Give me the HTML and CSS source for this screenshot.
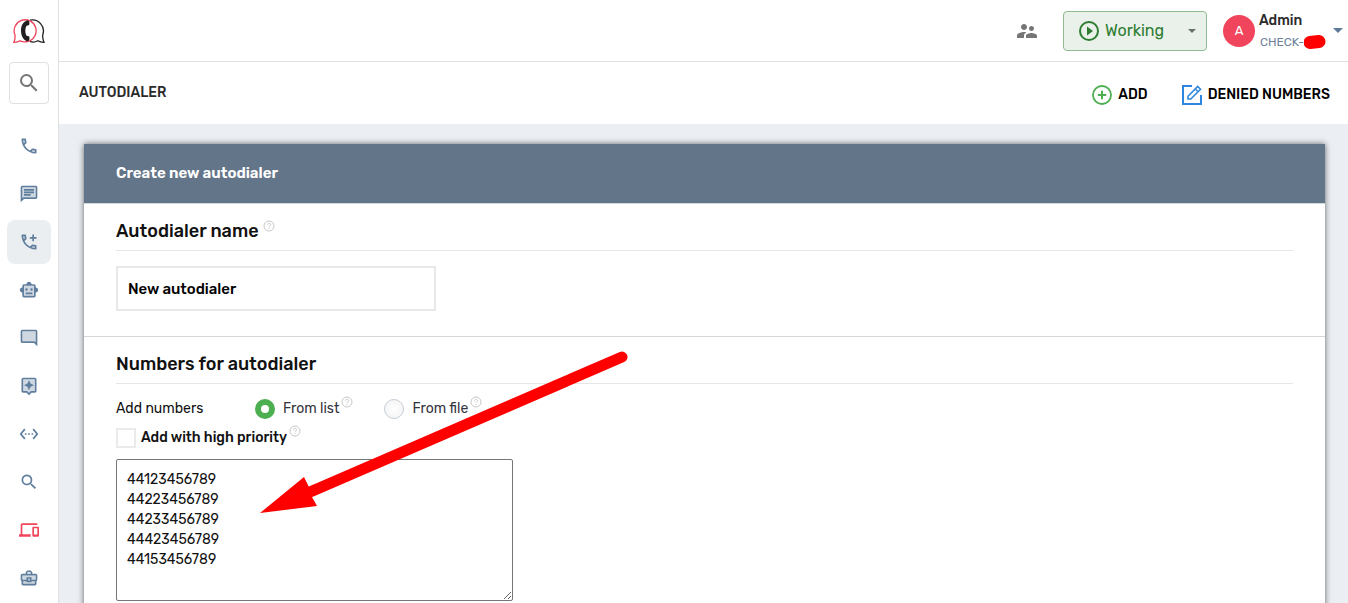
FILE: index.html
```html
<!DOCTYPE html>
<html lang="en">
<head>
    <meta charset="UTF-8">
    <meta name="viewport" content="width=device-width, initial-scale=1.0">
    <title>Autodialer</title>
    <link rel="stylesheet" href="styles.css">
</head>
<body>
    <div class="app">
        <aside class="sidebar">
            <a class="logo" href="#" aria-label="Home">
                <svg width="32" height="26" viewBox="0 0 32 26" fill="none">
                    <path d="M17 2.200a11 11 0 0 1 12.800 14.300c-.4 2.500.2 5.500 1.200 7.900-2.600 0-4.700-.6-6.200-1.600-2.500 1.400-5.500 1.600-8 .5" stroke="#231f20" stroke-width="1.300"/>
                    <path d="M7 22.800C4.500 23.900 2.500 24.400.8 24.400 2 22 2.300 19.500 1.900 16.800A11 11 0 1 1 15 23.400c-3 .9-5.600.5-8-.6z" stroke="#f0455c" stroke-width="1.300"/>
                    <path d="M15 2.300c-4.500.7-7 5-7 10.200 0 5.700 2.700 10.300 7 10.900 1.300-.7 2-2.900 1.200-4.900l-2.900-.9c-1.300-2.900-1.300-6.600 0-9.500l2.800-1c.8-1.900.3-4.100-1.100-4.800z" fill="#231f20"/>
                </svg>
            </a>
            <button class="search-btn" type="button" aria-label="Search">
                <svg width="24" height="24" viewBox="0 0 24 24" fill="currentColor"><path d="M15.500 14h-.79l-.28-.27A6.471 6.471 0 0 0 16 9.500 6.500 6.500 0 1 0 9.500 16c1.610 0 3.090-.59 4.230-1.570l.27.28v.79l5 4.990L20.490 19l-4.990-5zm-6 0C7.010 14 5 11.990 5 9.500S7.010 5 9.500 5 14 7.010 14 9.500 11.990 14 9.500 14z"/></svg>
            </button>
            <nav class="menu">
                <a class="menu-item" href="#" aria-label="Calls">
                    <svg viewBox="0 0 24 24"><path opacity=".3" d="M5 5h1.600l.4 2.600-1.300 1.300zM15.200 18.200l1.200-1.200 2.600.5v1.500z"/><path d="M6.540 5c.06.89.21 1.760.45 2.590l-1.200 1.200c-.41-1.200-.67-2.470-.76-3.790h1.510m9.860 12.020c.85.24 1.720.39 2.600.45v1.490c-1.320-.09-2.590-.35-3.800-.75l1.200-1.190M7.500 3H4c-.55 0-1 .45-1 1 0 9.390 7.610 17 17 17 .55 0 1-.45 1-1v-3.490c0-.55-.45-1-1-1-1.240 0-2.450-.2-3.570-.57-.1-.04-.21-.05-.31-.05-.26 0-.51.1-.71.29l-2.200 2.200c-2.830-1.450-5.150-3.760-6.590-6.590l2.200-2.200c.28-.28.36-.67.25-1.020C8.700 6.450 8.500 5.250 8.500 4c0-.55-.45-1-1-1z"/></svg>
                </a>
                <a class="menu-item" href="#" aria-label="Messages">
                    <svg viewBox="0 0 24 24"><path opacity=".3" d="M4 4v13.170L5.170 16H20V4H4z"/><path d="M4 18h16c1.100 0 2-.9 2-2V4c0-1.100-.9-2-2-2H4c-1.100 0-1.990.9-1.990 2L2 22l4-4h-2zm0-14h16v12H5.170L4 17.170V4zm2 8h8v2H6zm0-3h12v2H6zm0-3h12v2H6z"/></svg>
                </a>
                <a class="menu-item active" href="#" aria-label="Autodialer">
                    <svg viewBox="0 0 24 24"><path opacity=".3" d="M5 5h1.600l.4 2.600-1.300 1.300zM15.200 18.200l1.200-1.200 2.600.5v1.500z"/><path d="M6.540 5c.06.89.21 1.760.45 2.590l-1.200 1.200c-.41-1.200-.67-2.470-.76-3.790h1.510m9.860 12.020c.85.24 1.720.39 2.600.45v1.490c-1.320-.09-2.590-.35-3.800-.75l1.200-1.190M7.500 3H4c-.55 0-1 .45-1 1 0 9.390 7.610 17 17 17 .55 0 1-.45 1-1v-3.490c0-.55-.45-1-1-1-1.240 0-2.450-.2-3.570-.57-.1-.04-.21-.05-.31-.05-.26 0-.51.1-.71.29l-2.200 2.200c-2.830-1.450-5.150-3.760-6.590-6.590l2.200-2.200c.28-.28.36-.67.25-1.020C8.700 6.450 8.500 5.250 8.500 4c0-.55-.45-1-1-1zM16 3h2v3h3v2h-3v3h-2V8h-3V6h3z"/></svg>
                </a>
                <a class="menu-item" href="#" aria-label="Robots">
                    <svg viewBox="0 0 24 24"><path opacity=".3" d="M6 7h12v12H6z"/><path d="M20 9V7c0-1.100-.9-2-2-2h-3c0-1.660-1.340-3-3-3S9 3.340 9 5H6c-1.100 0-2 .9-2 2v2c-1.660 0-3 1.340-3 3s1.340 3 3 3v4c0 1.100.9 2 2 2h12c1.100 0 2-.9 2-2v-4c1.660 0 3-1.340 3-3s-1.340-3-3-3zm-2 10H6V7h12v12zM9 13a1.500 1.500 0 1 1 0-3 1.500 1.500 0 0 1 0 3zm7.500-1.500a1.500 1.500 0 1 1-3 0 1.500 1.500 0 0 1 3 0zM8 15h8v2H8z"/></svg>
                </a>
                <a class="menu-item" href="#" aria-label="Chats">
                    <svg viewBox="0 0 24 24"><path opacity=".3" d="M4 16h14.830L20 17.170V4H4v12z"/><path d="M22 4c0-1.100-.9-2-2-2H4c-1.100 0-2 .9-2 2v12c0 1.100.9 2 2 2h14l4 4V4zm-2 13.170L18.830 16H4V4h16v13.170z"/></svg>
                </a>
                <a class="menu-item" href="#" aria-label="Assistant">
                    <svg viewBox="0 0 24 24"><path opacity=".3" d="M5 4v14h4.830L12 20.170 14.170 18H19V4H5z"/><path d="M19 2H5c-1.100 0-2 .9-2 2v14c0 1.100.9 2 2 2h4l3 3 3-3h4c1.100 0 2-.9 2-2V4c0-1.100-.9-2-2-2zm0 16h-4.830L12 20.170 9.830 18H5V4h14v14zm-7-1l1.880-4.120L18 11l-4.120-1.880L12 5l-1.880 4.120L6 11l4.120 1.880z"/></svg>
                </a>
                <a class="menu-item" href="#" aria-label="Integrations">
                    <svg viewBox="0 0 24 24"><path d="M7.770 6.760L6.230 5.480.82 12l5.410 6.520 1.540-1.280L3.420 12l4.350-5.240zM7 13h2v-2H7v2zm10-2h-2v2h2v-2zm-6 2h2v-2h-2v2zm6.770-7.520l-1.540 1.280L20.580 12l-4.350 5.240 1.540 1.280L23.180 12l-5.410-6.520z"/></svg>
                </a>
                <a class="menu-item" href="#" aria-label="Find">
                    <svg viewBox="0 0 24 24"><path d="M15.500 14h-.79l-.28-.27A6.471 6.471 0 0 0 16 9.500 6.500 6.500 0 1 0 9.500 16c1.610 0 3.090-.59 4.230-1.570l.27.28v.79l5 4.990L20.490 19l-4.990-5zm-6 0C7.010 14 5 11.990 5 9.500S7.010 5 9.500 5 14 7.010 14 9.500 11.990 14 9.500 14z"/></svg>
                </a>
                <a class="menu-item danger" href="#" aria-label="Devices">
                    <svg viewBox="0 0 24 24"><path d="M4 6h18V4H4c-1.100 0-2 .9-2 2v11H0v3h14v-3H4V6zm19 2h-6c-.55 0-1 .45-1 1v10c0 .55.450 1 1 1h6c.55 0 1-.45 1-1V9c0-.55-.45-1-1-1zm-1 9.500h-4V10h4v7.500z"/></svg>
                </a>
                <a class="menu-item" href="#" aria-label="Business">
                    <svg viewBox="0 0 24 24"><path opacity=".3" d="M4 9h16v11H4z"/><path d="M20 7h-4V5l-2-2h-4L8 5v2H4c-1.100 0-2 .9-2 2v5c0 .75.4 1.380 1 1.730V19c0 1.110.89 2 2 2h14c1.110 0 2-.89 2-2v-3.280c.59-.35 1-.99 1-1.720V9c0-1.100-.9-2-2-2zM10 5h4v2h-4V5zM4 9h16v5h-5v-3H9v3H4V9zm9 6h-2v-2h2v2zm6 4H5v-3h4v1h6v-1h4v3z"/></svg>
                </a>
            </nav>
        </aside>

        <div class="page">
            <header class="topbar">
                <button class="icon-btn" type="button" aria-label="Users">
                    <svg width="24" height="24" viewBox="0 0 24 24" fill="currentColor"><path d="M16.500 12c1.380 0 2.490-1.120 2.490-2.500S17.880 7 16.500 7 14 8.120 14 9.500s1.120 2.500 2.500 2.500zM9 11c1.660 0 2.990-1.340 2.990-3S10.660 5 9 5 6 6.340 6 8s1.340 3 3 3zm7.500 3c-1.830 0-5.500.92-5.500 2.750V19h11v-2.250c0-1.830-3.670-2.750-5.500-2.750zM9 13c-2.330 0-7 1.170-7 3.500V19h7v-2.250c0-.85.33-2.340 2.370-3.470C10.500 13.100 9.660 13 9 13z"/></svg>
                </button>
                <div class="status">
                    <svg width="20" height="20" viewBox="0 0 20 20"><circle cx="10" cy="10" r="9" fill="none" stroke="#2e7d32" stroke-width="2"/><path d="M8 5.500v9l6-4.500z" fill="#2e7d32"/></svg>
                    <select class="status-select" aria-label="Status">
                        <option>Working</option>
                        <option>Break</option>
                    </select>
                    <svg width="8" height="4" viewBox="0 0 8 4"><path d="M0 0h8L4 4z" fill="#66756a"/></svg>
                </div>
                <button class="account" type="button">
                    <span class="avatar">A</span>
                    <span class="account-text">
                        <span class="account-name">Admin</span>
                        <span class="account-id">CHECK-<svg width="24" height="14" viewBox="0 0 24 14"><path d="M6 7.500l9-1" stroke="#f00" stroke-width="13" stroke-linecap="round"/></svg></span>
                    </span>
                    <svg width="10" height="5" viewBox="0 0 10 5"><path d="M0 0h10L5 5z" fill="#5b7a99"/></svg>
                </button>
            </header>

            <div class="toolbar">
                <h1>AUTODIALER</h1>
                <a class="tool-link" href="#">
                    <svg width="20" height="20" viewBox="0 0 20 20" fill="none" stroke="#4caf50"><circle cx="10" cy="10" r="9" stroke-width="1.800"/><path d="M10 5.800v8.400M5.800 10h8.400" stroke-width="2"/></svg>
                    ADD
                </a>
                <a class="tool-link" href="#">
                    <svg width="20" height="20" viewBox="0 0 20 20" fill="none" stroke="#2f86e0" stroke-width="2"><path d="M10 1H1v18h18v-9"/><path d="M6 11.200L15.700 1.500l2.800 2.800L8.800 14H6z" stroke-width="1.600"/><path d="M13.300 3.900l2.800 2.800" stroke-width="1.400"/></svg>
                    DENIED NUMBERS
                </a>
            </div>

            <main class="content">
                <form class="card">
                    <div class="card-header">Create new autodialer</div>

                    <section class="section">
                        <h2><label for="name">Autodialer name</label>
                            <svg class="help" viewBox="0 0 12 12"><circle cx="6" cy="6" r="5"/><path d="M4.500 4.800c0-2 3.100-2 3.100 0 0 1.100-1.600 1.100-1.600 2.300M6 8v1"/></svg>
                        </h2>
                        <input class="name-input" type="text" id="name" value="New autodialer">
                    </section>

                    <section class="section">
                        <h2>Numbers for autodialer</h2>
                        <div class="source-row" role="radiogroup" aria-labelledby="source">
                            <span class="source-title" id="source">Add numbers</span>
                            <label class="choice"><input class="radio" type="radio" name="source" checked> From list
                                <svg class="help" viewBox="0 0 12 12"><circle cx="6" cy="6" r="5"/><path d="M4.500 4.800c0-2 3.100-2 3.100 0 0 1.100-1.600 1.100-1.600 2.300M6 8v1"/></svg>
                            </label>
                            <label class="choice"><input class="radio" type="radio" name="source"> From file
                                <svg class="help" viewBox="0 0 12 12"><circle cx="6" cy="6" r="5"/><path d="M4.500 4.800c0-2 3.100-2 3.100 0 0 1.100-1.600 1.100-1.600 2.300M6 8v1"/></svg>
                            </label>
                        </div>
                        <label class="priority"><input class="checkbox" type="checkbox"> Add with high priority
                            <svg class="help" viewBox="0 0 12 12"><circle cx="6" cy="6" r="5"/><path d="M4.500 4.800c0-2 3.100-2 3.100 0 0 1.100-1.600 1.100-1.600 2.300M6 8v1"/></svg>
                        </label>
                        <textarea class="numbers" rows="6" aria-label="Numbers">44123456789
44223456789
44233456789
44423456789
44153456789</textarea>
                    </section>

                    <!-- pointer to the list of numbers -->
                    <svg class="arrow" width="370" height="166" viewBox="0 0 370 166">
                        <path d="M362 7L50 142" stroke="#f00" stroke-width="11" stroke-linecap="round"/>
                        <path d="M0 163l44-36 5 10 3 10 5 9z" fill="#f00"/>
                    </svg>
                </form>
            </main>
        </div>
    </div>
</body>
</html>
```

FILE: styles.css
```css
* { box-sizing: border-box; }
body { margin: 0; font-family: Rubik, Roboto, "Liberation Sans", sans-serif; font-size: 14px; line-height: 20px; color: #111; background: #fff; }
a { color: inherit; text-decoration: none; }
button, input, select, textarea { font: inherit; color: inherit; }
button { border: none; background: none; padding: 0; cursor: pointer; }
svg { display: block; flex-shrink: 0; }

.app { display: flex; height: 100vh; overflow: hidden; }

/* sidebar */
.sidebar { flex: none; width: 59px; border-right: 1px solid #e0e0e0; display: flex; flex-direction: column; align-items: center; }
.logo { padding: 18px 0; }
.search-btn { width: 40px; height: 42px; border: 1px solid #e0e0e0; border-radius: 4px; color: #757575; display: flex; align-items: center; justify-content: center; flex: none; }
.menu { display: flex; flex-direction: column; gap: 4px; padding-top: 20px; }
.menu-item { width: 44px; height: 44px; border-radius: 8px; display: flex; align-items: center; justify-content: center; flex: none; color: #5f7d9c; }
.menu-item svg { width: 20px; height: 20px; fill: currentColor; }
.menu-item.active { background: #ebeef1; }
.menu-item.danger { color: #f0455c; }

/* header */
.page { flex: 1; min-width: 0; display: flex; flex-direction: column; }
.topbar { flex: none; height: 62px; border-bottom: 1px solid #e0e0e0; display: flex; align-items: center; justify-content: flex-end; padding-right: 5px; }
.icon-btn { color: #757575; margin-right: 24px; }
.status { display: flex; align-items: center; width: 144px; height: 40px; padding: 0 10px 0 15px; margin-right: 16px; border: 1px solid #8fbc92; border-radius: 4px; background: #eaf1ea; }
.status-select { flex: 1; min-width: 0; appearance: none; border: none; background: none; padding: 0 6px; font-size: 16px; color: #2e7d32; cursor: pointer; }
.account { display: flex; align-items: center; text-align: left; gap: 4px; }
.avatar { width: 32px; height: 32px; border-radius: 50%; background: #f0455c; color: #fff; display: flex; align-items: center; justify-content: center; font-size: 13px; }
.account-text { width: 70px; padding-top: 1px; display: flex; flex-direction: column; gap: 1px; }
.account-name { font-weight: 500; color: #2b2b2b; }
.account-id { display: flex; align-items: center; padding-left: 1px; font-size: 12px; color: #6d8299; }

.toolbar { flex: none; height: 62px; display: flex; align-items: center; gap: 34px; padding: 0 18px 0 20px; }
.toolbar h1 { margin: 0 auto 0 0; font-size: 14px; font-weight: 500; color: #2b2b2b; }
.tool-link { display: flex; align-items: center; gap: 6px; padding-top: 3px; font-weight: 500; color: #000; }

/* form */
.content { flex: 1; min-height: 0; overflow: auto; scrollbar-width: none; padding: 20px 23px 20px 25px; background: #ebeff4; }
.card { position: relative; background: #fff; box-shadow: 0 0 6px rgba(0, 0, 0, 0.6); }
.card-header { height: 60px; padding: 19px 32px; background: #637589; border-bottom: 1px solid #cfd8dc; color: #fff; font-size: 15px; font-weight: 600; }
.section { padding: 16px 32px 25px; border-bottom: 1px solid #d6d6d6; }
.section h2 { display: flex; gap: 4px; margin: 0 0 15px; padding-bottom: 8px; border-bottom: 1px solid #e6e6e6; font-size: 18px; font-weight: 500; line-height: 22px; }
.help { width: 12px; height: 12px; fill: none; stroke: #c8c8c8; }
.name-input { display: block; width: 320px; max-width: 100%; height: 45px; padding: 0 10px; border: 2px solid #e8e8e8; font-size: 15px; font-weight: 500; color: #000; }

.source-row { display: flex; margin-bottom: 9px; }
.source-title { width: 139px; }
.choice, .priority { display: flex; }
.choice { margin-right: 31px; color: #34343c; }
.choice .help, .priority .help { margin: -3px 0 0 2px; }
.radio, .checkbox { appearance: none; width: 20px; height: 20px; margin: 0; background: #fff; }
.radio { border: 1px solid #c5ced6; border-radius: 50%; margin-right: 8px; background: radial-gradient(#fff, #f1f1f1); }
.radio:checked { border: 6px solid #4caf50; background: #fff; }
.checkbox { border: 2px solid #ebebeb; margin-right: 5px; }
.priority { margin-bottom: 11px; font-weight: 500; }
.numbers { display: block; width: 397px; max-width: 100%; height: 142px; padding: 10px; border: 1px solid #767676; border-radius: 2px; }

.arrow { position: absolute; left: 176px; top: 206px; fill: none; pointer-events: none; }
```
